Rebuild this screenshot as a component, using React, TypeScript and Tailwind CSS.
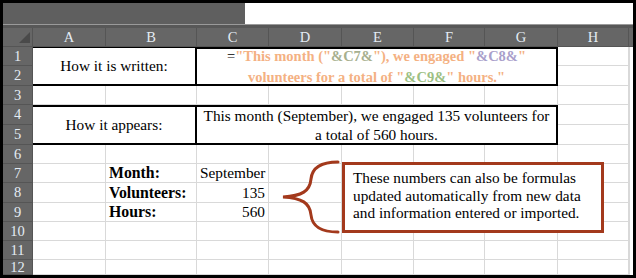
import React from 'react'

const COLS = ['A', 'B', 'C', 'D', 'E', 'F', 'G', 'H']
const ROWS = [1, 2, 3, 4, 5, 6, 7, 8, 9, 10, 11, 12]

const serif = { fontFamily: '"Liberation Serif", "DejaVu Serif", serif' }

const orange = 'text-[#f4b183]'

function Corner() {
  return (
    <div className="relative bg-[#666666] border-r border-b border-[#555555]">
      <svg className="absolute right-[2px] bottom-[3px]" width="11" height="11" viewBox="0 0 11 11">
        <polygon points="11,0 11,11 0,11" fill="#4a4a4a" />
      </svg>
    </div>
  )
}

function RowHead({ n }: { n: number }) {
  return (
    <div className="flex items-center justify-center bg-[#666666] border-r border-b border-[#555555] text-[#e4ecf4] text-[14.5px] leading-none">
      {n}
    </div>
  )
}

function Cell({ children, className = '' }: { children?: React.ReactNode; className?: string }) {
  return (
    <div className={`flex items-end bg-white border-r border-b border-[#d9d9d9] text-[15.3px] leading-[18px] text-black overflow-visible whitespace-nowrap ${className}`}>
      {children}
    </div>
  )
}

function Blanks({ from }: { from: number }) {
  // columns from index (0 = A) to H, plus the narrow strip
  return (
    <>
      {COLS.slice(from).map(c => <Cell key={c} />)}
      <div className="bg-white border-l border-[#d9d9d9]" />
    </>
  )
}

export default function App() {
  return (
    <div className="w-[636px] h-[278px] bg-black p-[3px] overflow-hidden" style={serif}>
      <div className="w-[630px] h-[272px] flex flex-col overflow-hidden relative">
        {/* formula bar strip */}
        <div className="h-[21px] flex shrink-0">
          <div className="w-[242px] bg-[#5f5f5f]" />
          <div className="flex-1 bg-white" />
        </div>
        <div className="h-[1px] bg-[#9a9a9a] shrink-0" />
        <div className="h-[3px] bg-[#585858] shrink-0" />

        {/* column headers */}
        <div className="grid grid-cols-[30px_73px_91px_72px_73px_72px_71px_73px_71px_4px] h-[19px] shrink-0">
          <Corner />
          {COLS.map(c => (
            <div key={c} className="flex items-center justify-center bg-[#666666] border-r border-b border-[#555555] text-[#e4ecf4] text-[14.5px] leading-none">
              {c}
            </div>
          ))}
          <div className="bg-[#666666] border-b border-[#555555]" />
        </div>

        {/* sheet body */}
        <div className="grid grid-cols-[30px_73px_91px_72px_73px_72px_71px_73px_71px_4px] grid-rows-[19px_20px_19px_20px_20px_19px_19px_20px_19px_19px_19px_15px] flex-1">
          {ROWS.map(r => {
            if (r === 1) {
              return (
                <React.Fragment key={r}>
                  <RowHead n={r} />
                  <div className="col-span-2 row-span-2 flex items-center justify-center bg-white border-t border-r-2 border-b-2 border-black text-[15.3px]">
                    How it is written:
                  </div>
                  <div className="col-span-5 row-span-2 flex flex-col items-center justify-center bg-white border-t-2 border-r-2 border-b-2 border-black text-[14.5px] leading-[21px] font-bold">
                    <div>
                      <span className="font-normal">=</span>
                      <span className={orange}>"This month ("</span>
                      <span className="text-[#a7b08f]">&amp;C7&amp;</span>
                      <span className={orange}>"), we engaged "</span>
                      <span className="text-[#a99fcb]">&amp;C8&amp;</span>
                      <span className={orange}>"</span>
                    </div>
                    <div>
                      <span className={orange}>volunteers for a total of "</span>
                      <span className="text-[#9dbf84]">&amp;C9&amp;</span>
                      <span className={orange}>" hours."</span>
                    </div>
                  </div>
                  <Blanks from={7} />
                </React.Fragment>
              )
            }
            if (r === 4) {
              return (
                <React.Fragment key={r}>
                  <RowHead n={r} />
                  <div className="col-span-2 row-span-2 flex items-center justify-center bg-white border-t-2 border-r-2 border-b-2 border-black text-[15.3px]">
                    How it appears:
                  </div>
                  <div className="col-span-5 row-span-2 flex flex-col items-center justify-center bg-white border-t-2 border-r-2 border-b-2 border-black text-[15.3px] leading-[19px]">
                    <div>This month (September), we engaged 135 volunteers for</div>
                    <div>a total of 560 hours.</div>
                  </div>
                  <Blanks from={7} />
                </React.Fragment>
              )
            }
            if (r === 2 || r === 5) {
              return (
                <React.Fragment key={r}>
                  <RowHead n={r} />
                  <Blanks from={7} />
                </React.Fragment>
              )
            }
            if (r >= 7 && r <= 9) {
              const label = r === 7 ? 'Month:' : r === 8 ? 'Volunteers:' : 'Hours:'
              const value = r === 7 ? 'September' : r === 8 ? '135' : '560'
              return (
                <React.Fragment key={r}>
                  <RowHead n={r} />
                  <Cell />
                  <Cell className="pl-[3px] font-bold text-[15.8px]">{label}</Cell>
                  <Cell className={r === 7 ? 'pl-[3px]' : 'justify-end pr-[3px]'}>{value}</Cell>
                  <Blanks from={3} />
                </React.Fragment>
              )
            }
            return (
              <React.Fragment key={r}>
                <RowHead n={r} />
                <Blanks from={0} />
              </React.Fragment>
            )
          })}
        </div>

        {/* curly brace */}
        <svg className="absolute left-[261px] top-[152px]" width="80" height="80" viewBox="264 155 80 80">
          <path
            d="M338,162 C319,162 312,169 311,179 C310,191 302,196 283,197 C302,198 310,203 311,215 C312,225 319,232 338,232"
            fill="none"
            stroke="#a3391c"
            strokeWidth="3"
            strokeLinecap="round"
          />
        </svg>

        {/* callout */}
        <div className="absolute left-[339px] top-[159px] w-[262px] h-[71px] bg-white border-[3px] border-[#a3391c] pl-[8px] pt-[4px] text-[15.3px] leading-[17.5px] text-black">
          <div>These numbers can also be formulas</div>
          <div>updated automatically from new data</div>
          <div>and information entered or imported.</div>
        </div>
      </div>
    </div>
  )
}
